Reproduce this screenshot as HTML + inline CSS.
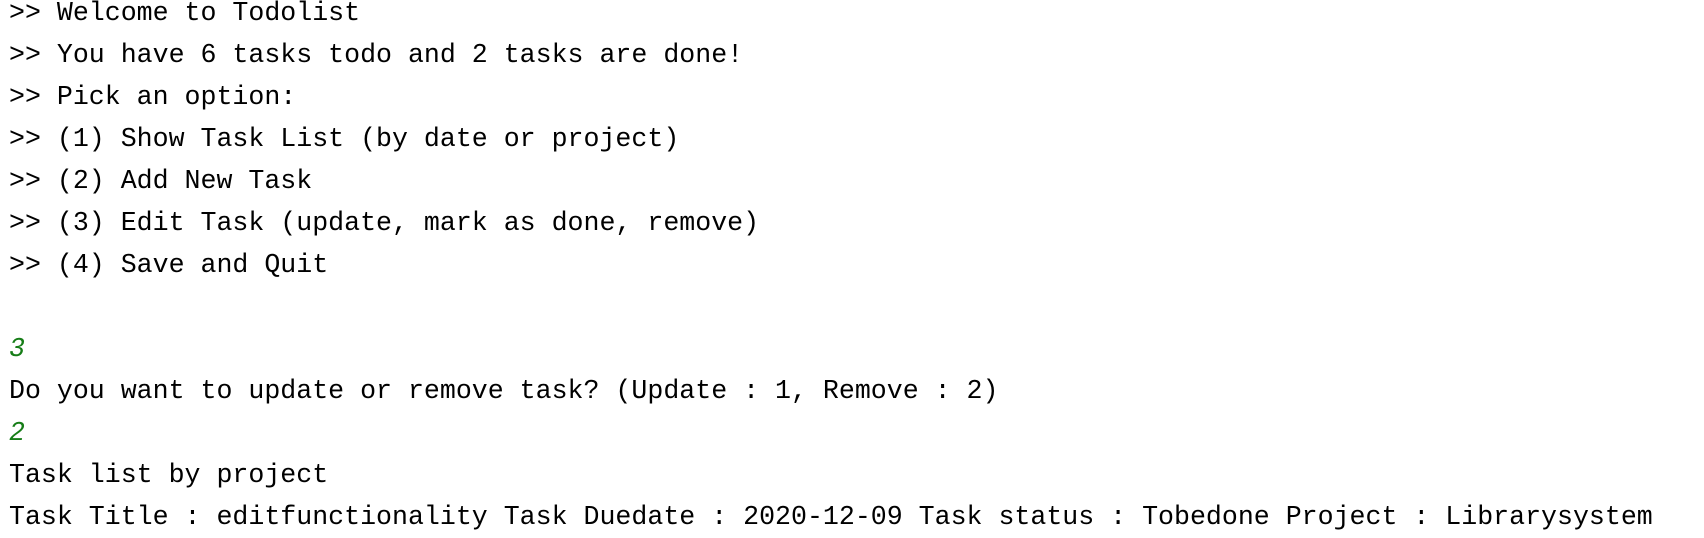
<!DOCTYPE html>
<html><head><meta charset="utf-8"><style>
html,body{margin:0;padding:0;background:#fff;width:1704px;height:532px;overflow:hidden}
pre{margin:0;position:absolute;left:9px;top:-8px;font-family:"Liberation Mono",monospace;font-size:26.6px;line-height:42px;color:#000}
.g{color:#167d17;font-style:italic}
</style></head><body><pre>&gt;&gt; Welcome to Todolist
&gt;&gt; You have 6 tasks todo and 2 tasks are done!
&gt;&gt; Pick an option:
&gt;&gt; (1) Show Task List (by date or project)
&gt;&gt; (2) Add New Task
&gt;&gt; (3) Edit Task (update, mark as done, remove)
&gt;&gt; (4) Save and Quit

<span class="g">3</span>
Do you want to update or remove task? (Update : 1, Remove : 2)
<span class="g">2</span>
Task list by project
Task Title : editfunctionality Task Duedate : 2020-12-09 Task status : Tobedone Project : Librarysystem</pre></body></html>
